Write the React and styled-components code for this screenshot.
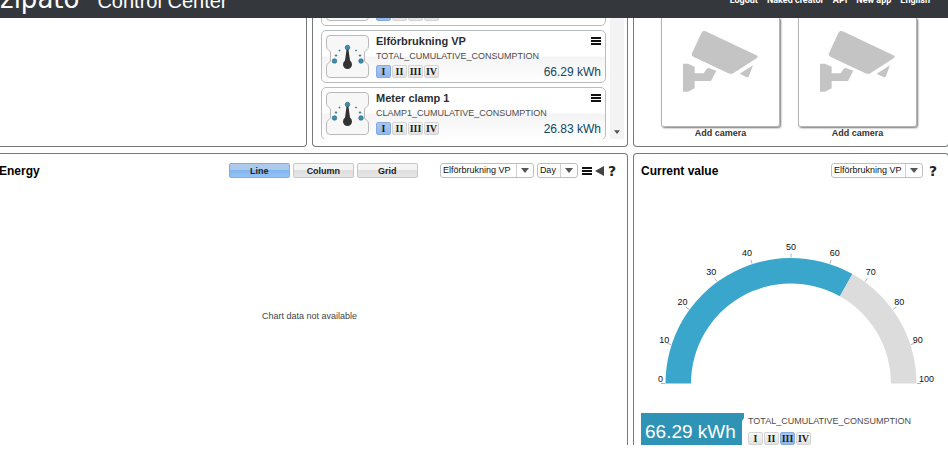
import React, {useState} from "react";
import styled, {createGlobalStyle} from "styled-components";

const GlobalStyle = createGlobalStyle`
  * {
    box-sizing: border-box;
  }
  body {
    margin: 0;
    background-color: #fff;
    color: #222;
    font-family: "Liberation Sans", Arial, sans-serif;
    font-size: 9px;
  }
  button, select {
    font-family: inherit;
    margin: 0;
  }
`;
const Page = styled.div`
  height: calc(100vh - 13px);
  display: flex;
  flex-direction: column;
  overflow: hidden;
`;
const Header = styled.header`
  flex: none;
  height: 18px;
  padding: 0 18px 0 0;
  overflow: hidden;
  display: flex;
  align-items: flex-end;
  justify-content: space-between;
  background-color: #34383c;
  color: #fff;
`;
const Brand = styled.div`
  display: flex;
  align-items: baseline;
  gap: 18px;
  padding-bottom: 5px;
`;
const Logo = styled.span`
  font-family: "DejaVu Sans", sans-serif;
  font-size: 26px;
  line-height: 24px;
`;
const Product = styled.span`
  font-size: 20px;
  line-height: 24px;
`;
const Nav = styled.nav`
  display: flex;
  gap: 9px;
  padding-bottom: 12px;
`;
const NavLink = styled.a`
  color: #fff;
  font-family: Roboto, sans-serif;
  font-size: 9px;
  line-height: 11px;
  font-weight: bold;
  text-decoration: none;
  white-space: nowrap;
`;
const Dashboard = styled.main`
  flex: 1;
  min-height: 0;
  margin: 0 -1px 0 -9px;
  display: grid;
  grid-template-columns: repeat(3, minmax(0, 1fr));
  grid-template-rows: auto 1fr;
  column-gap: 5px;
  row-gap: 6px;
`;
const Panel = styled.section`
  min-height: 0;
  border: 1px solid #77797b;
  border-top-width: ${({$open}) => $open === 'top' ? 0 : 1}px;
  border-bottom-width: ${({$open}) => $open === 'bottom' ? 0 : 1}px;
  border-radius: ${({$open}) => $open === 'top' ? '0 0 4px 4px' : '4px 4px 0 0'};
  grid-column: span ${({$span}) => $span || 1};
  display: flex;
  flex-direction: column;
  overflow: hidden;
`;
const Scroller = styled.div`
  display: flex;
  justify-content: space-between;
  max-height: 121px;
  margin: 0 3px 7px 8px;
  overflow: hidden;
`;
const List = styled.ul`
  flex: 1;
  list-style: none;
  margin: -45px 4px 0 0;
  padding: 0;
  display: flex;
  flex-direction: column;
  gap: 4px;
`;
const Card = styled.li`
  flex: none;
  height: 53px;
  padding: 4px;
  display: flex;
  gap: 7px;
  border: 1px solid #b9bcbf;
  border-radius: 5px;
  background: linear-gradient(#fff 48%, #f4f4f4 52%, #fff);
`;
const CardBody = styled.div`
  flex: 1;
  display: flex;
  flex-direction: column;
  justify-content: space-between;
`;
const CardRow = styled.div`
  display: flex;
  justify-content: space-between;
  align-items: center;
  min-height: 12px;
`;
const CardTitle = styled.h3`
  margin: 0;
  font-size: 11px;
  line-height: 12px;
  color: #2b2f33;
`;
const Attribute = styled.div`
  font-size: 9px;
  line-height: 11px;
  min-height: 11px;
  color: #4c4c4c;
  white-space: nowrap;
`;
const Reading = styled.span`
  font-size: 12px;
  line-height: 12px;
  color: #0f4660;
`;
const Levels = styled.div`
  display: flex;
  gap: 1px;
`;
const Level = styled.button`
  width: 15px;
  height: 13px;
  padding: 0;
  border: 1px solid ${({$on}) => $on ? '#86abdc' : '#d4d4d4'};
  border-radius: 2px;
  background: ${({$on}) => $on ? 'linear-gradient(#a9c6ef, #93b7ea)' : 'linear-gradient(#f6f6f6, #e2e2e2)'};
  color: #222;
  font-family: "Liberation Serif", serif;
  font-size: 10px;
  line-height: 11px;
  font-weight: bold;
  cursor: pointer;
`;
const IconButton = styled.button`
  display: flex;
  padding: 0;
  border: none;
  background: none;
  color: #222;
  cursor: pointer;
`;
const ScrollBar = styled.div`
  width: 14px;
  display: flex;
  justify-content: center;
  align-items: flex-end;
  padding-bottom: 5px;
  background-color: #f3f3f3;
`;
const Cameras = styled.div`
  display: flex;
  justify-content: center;
  gap: 18px;
  padding-right: 4px;
`;
const Camera = styled.button`
  padding: 0;
  border: none;
  background: none;
  display: flex;
  flex-direction: column;
  align-items: center;
  color: #333;
  font-size: 9px;
  line-height: 12px;
  font-weight: bold;
  cursor: pointer;
`;
const CameraBox = styled.span`
  width: 119px;
  height: 109px;
  padding-bottom: 34px;
  display: flex;
  justify-content: center;
  align-items: flex-end;
  border: 1px solid #b5b5b5;
  border-top: none;
  border-radius: 0 0 3px 3px;
  box-shadow: 1px 1px 2px #777;
`;
const PanelHead = styled.div`
  flex: none;
  display: flex;
  align-items: center;
  height: 33px;
  padding: 0 11px 0 7px;
`;
const PanelTitle = styled.h2`
  flex: 1;
  margin: 0;
  font-size: 12px;
  line-height: 16px;
  color: #000;
`;
const Tabs = styled.div`
  display: flex;
  gap: 3px;
  margin-right: 22px;
`;
const Tab = styled.button`
  width: 61px;
  height: 15px;
  padding: 0;
  border: 1px solid ${({$on}) => $on ? '#88acd8' : '#c8c8c8'};
  border-radius: 2px;
  background: ${({$on}) => $on
    ? 'linear-gradient(#adc9ec 45%, #83b5ee 50%, #94c2f4)'
    : 'linear-gradient(#f4f4f4 45%, #dedede 50%, #e6e6e6)'};
  color: #222;
  font-size: 9px;
  line-height: 12px;
  font-weight: bold;
  cursor: pointer;
`;
const SelectWrap = styled.div`
  position: relative;
  margin-right: ${({$gap}) => $gap}px;
`;
const Select = styled.select`
  appearance: none;
  display: block;
  width: ${({$width}) => $width}px;
  height: 15px;
  padding: 0 18px 0 2px;
  border: 1px solid #bcc0c4;
  border-radius: 3px;
  background-color: #fff;
  color: #111;
  font-size: 9px;
  line-height: 13px;
`;
const SelectArrow = styled.span`
  position: absolute;
  top: 1px;
  bottom: 1px;
  right: 1px;
  width: 17px;
  border-left: 1px solid #cfd2d5;
  display: flex;
  align-items: center;
  justify-content: center;
  pointer-events: none;
`;
const Tools = styled.div`
  display: flex;
  align-items: center;
  gap: 3px;
  margin-right: 4px;
`;
const Help = styled.button`
  padding: 0;
  border: none;
  background: none;
  color: #222;
  font-family: "DejaVu Sans", sans-serif;
  font-size: 14px;
  line-height: 14px;
  font-weight: bold;
  cursor: pointer;
`;
const EmptyChart = styled.p`
  flex: 1;
  margin: 0;
  display: flex;
  align-items: center;
  justify-content: center;
  font-size: 9px;
  color: #444;
`;
const Gauge = styled.svg`
  flex: none;
  display: block;
  width: 300px;
  height: 150px;
  margin: 53px auto 23px;
  font-size: 9px;
  fill: #111;
  overflow: visible;
`;
const Summary = styled.div`
  flex: none;
  display: flex;
  gap: 4px;
  padding: 0 7px;
`;
const BigReading = styled.div`
  width: 103px;
  height: 38px;
  padding-left: 4px;
  background-color: #2e93b4;
  clip-path: polygon(0 0, 100% 0, 100% 5px, 101px 8px, 101px 100%, 0 100%);
  color: #fff;
  font-size: 19px;
  line-height: 37px;
  white-space: nowrap;
`;
const SummaryBody = styled.div`
  display: flex;
  flex-direction: column;
  gap: 5px;
  padding-top: 3px;
`;

const meters = [
    {name: '', attribute: '', value: ''},
    {name: 'Elförbrukning VP', attribute: 'TOTAL_CUMULATIVE_CONSUMPTION', value: '66.29 kWh'},
    {name: 'Meter clamp 1', attribute: 'CLAMP1_CUMULATIVE_CONSUMPTION', value: '26.83 kWh'},
];
const links = ['Logout', 'Naked creator', 'API', 'New app', 'English'];

const Arrow = ({size = 8}) => (
    <svg width={size} height={size / 2 + 1} viewBox="0 0 8 5" aria-hidden="true">
        <path d="M0 0h8L4 5z" fill="#555"/>
    </svg>
);

const MenuIcon = () => (
    <svg width="10" height="8" viewBox="0 0 10 8" aria-hidden="true">
        <path d="M0 0h10v2H0zM0 3h10v2H0zM0 6h10v2H0z" fill="#111"/>
    </svg>
);

const MeterIcon = () => (
    <svg width="43" height="43" viewBox="0 0 43 43" aria-hidden="true">
        <path
            d="M4 .5h35q3.500 0 3.500 3.500v7q0 3-2 4l-2 2v9l2 2q2 1 2 4v7q0 3.500-3.500 3.500H4Q.5 42.500.5 39v-7q0-3 2-4l2-2v-9l-2-2q-2-1-2-4V4Q.5.5 4 .5z"
            fill="#f7f7f7" stroke="#b9b9b9"
        />
        <g fill="#398fb2" stroke="#245e76" strokeWidth=".6">
            <circle cx="21.500" cy="12.500" r="2.300"/>
            <circle cx="8.500" cy="26" r="2.300"/>
            <circle cx="35" cy="26" r="2.300"/>
            <circle cx="13.500" cy="15.500" r=".6"/>
            <circle cx="30" cy="15.500" r=".6"/>
            <circle cx="10" cy="20.500" r=".8"/>
            <circle cx="34" cy="20.500" r=".8"/>
        </g>
        <path d="M20.500 14.500h2l1.500 11q2 1.500 2 4a4.500 4.500 0 0 1-9 0q0-2.500 2-4z" fill="#333"/>
    </svg>
);

const CameraIcon = () => (
    <svg width="75" height="61" viewBox="150 95 225 183" fill="#c4c4c4" aria-hidden="true">
        <path d="M218 96l152 72q8 4 1 9l-68 43q-8 6-17 2l-105-50q-7-4-4-10l28-61q4-9 13-5z"/>
        <path d="M360 198l-12 32q-2 6-8 3l-20-10z"/>
        <path d="M150 193h15l20 9v20h27l7-11q4-7 11-4l20 7-16 31h-49v22l-20 10h-15z"/>
    </svg>
);

const LevelPicker = ({initial}) => {
    const [level, setLevel] = useState(initial);
    return (
        <Levels>
            {['I', 'II', 'III', 'IV'].map(item => (
                <Level key={item} $on={item === level} onClick={() => setLevel(item)}>{item}</Level>
            ))}
        </Levels>
    );
};

const Dropdown = ({label, width, gap, options}) => (
    <SelectWrap $gap={gap}>
        <Select aria-label={label} $width={width}>
            {options.map(option => <option key={option}>{option}</option>)}
        </Select>
        <SelectArrow><Arrow/></SelectArrow>
    </SelectWrap>
);

const point = (value, radius) => {
    const angle = Math.PI * (1 - value / 100);
    return [150 + radius * Math.cos(angle), 143.5 - radius * Math.sin(angle)];
};
const ring = (from, to) => {
    const outer = 125.5;
    const inner = 100;
    return `M${point(from, outer)}A${outer} ${outer} 0 0 1 ${point(to, outer)}`
        + `L${point(to, inner)}A${inner} ${inner} 0 0 0 ${point(from, inner)}z`;
};

const ValueGauge = ({value}) => (
    <Gauge viewBox="0 0 300 150" role="img" aria-label="Current value">
        <path d={ring(0, value)} fill="#3aa6cb"/>
        <path d={ring(value, 100)} fill="#dcdcdc"/>
        {[0, 10, 20, 30, 40, 50, 60, 70, 80, 90, 100].map(mark => {
            const [x1, y1] = point(mark, 126);
            const [x2, y2] = point(mark, 130);
            const [x] = point(mark, 129);
            const [, y] = point(mark, 135);
            const anchor = mark < 50 ? 'end' : mark > 50 ? 'start' : 'middle';
            const inward = Math.sign(50 - mark);
            // the two end labels stand just above the base line
            const drop = mark % 100 === 0 ? -2 : 1;
            return (
                <g key={mark}>
                    <line x1={x1} y1={y1} x2={x2} y2={y2} stroke="#b0b0b0"/>
                    <text x={x + inward} y={y + drop} textAnchor={anchor}>{mark}</text>
                </g>
            );
        })}
    </Gauge>
);

const App = () => {
    const [view, setView] = useState('Line');
    return (
        <Page>
            <GlobalStyle/>
            <Header>
                <Brand>
                    <Logo>zipato</Logo>
                    <Product>Control Center</Product>
                </Brand>
                <Nav>
                    {links.map(link => <NavLink key={link} href="#">{link}</NavLink>)}
                </Nav>
            </Header>
            <Dashboard>
                <Panel $open="top"/>
                <Panel $open="top">
                    <Scroller>
                        <List>
                            {meters.map(meter => (
                                <Card key={meter.name}>
                                    <MeterIcon/>
                                    <CardBody>
                                        <CardRow>
                                            <CardTitle>{meter.name}</CardTitle>
                                            <IconButton aria-label="Menu"><MenuIcon/></IconButton>
                                        </CardRow>
                                        <Attribute>{meter.attribute}</Attribute>
                                        <CardRow>
                                            <LevelPicker initial="I"/>
                                            <Reading>{meter.value}</Reading>
                                        </CardRow>
                                    </CardBody>
                                </Card>
                            ))}
                        </List>
                        <ScrollBar><Arrow size={6}/></ScrollBar>
                    </Scroller>
                </Panel>
                <Panel $open="top">
                    <Cameras>
                        <Camera><CameraBox><CameraIcon/></CameraBox>Add camera</Camera>
                        <Camera><CameraBox><CameraIcon/></CameraBox>Add camera</Camera>
                    </Cameras>
                </Panel>
                <Panel $open="bottom" $span={2}>
                    <PanelHead>
                        <PanelTitle>Energy</PanelTitle>
                        <Tabs>
                            {['Line', 'Column', 'Grid'].map(item => (
                                <Tab key={item} $on={item === view} onClick={() => setView(item)}>{item}</Tab>
                            ))}
                        </Tabs>
                        <Dropdown label="Meter" width={94} gap={3} options={['Elförbrukning VP', 'Meter clamp 1']}/>
                        <Dropdown label="Period" width={41} gap={4} options={['Day', 'Week', 'Month']}/>
                        <Tools>
                            <IconButton aria-label="Menu"><MenuIcon/></IconButton>
                            <IconButton aria-label="Previous">
                                <svg width="9" height="10" viewBox="0 0 9 10" aria-hidden="true">
                                    <path d="M9 0v10L0 5z" fill="#444"/>
                                </svg>
                            </IconButton>
                        </Tools>
                        <Help aria-label="Help">?</Help>
                    </PanelHead>
                    <EmptyChart>Chart data not available</EmptyChart>
                </Panel>
                <Panel $open="bottom">
                    <PanelHead>
                        <PanelTitle>Current value</PanelTitle>
                        <Dropdown label="Meter" width={92} gap={6} options={['Elförbrukning VP', 'Meter clamp 1']}/>
                        <Help aria-label="Help">?</Help>
                    </PanelHead>
                    <ValueGauge value={66.29}/>
                    <Summary>
                        <BigReading>66.29 kWh</BigReading>
                        <SummaryBody>
                            <Attribute>TOTAL_CUMULATIVE_CONSUMPTION</Attribute>
                            <LevelPicker initial="III"/>
                        </SummaryBody>
                    </Summary>
                </Panel>
            </Dashboard>
        </Page>
    );
};
export default App
